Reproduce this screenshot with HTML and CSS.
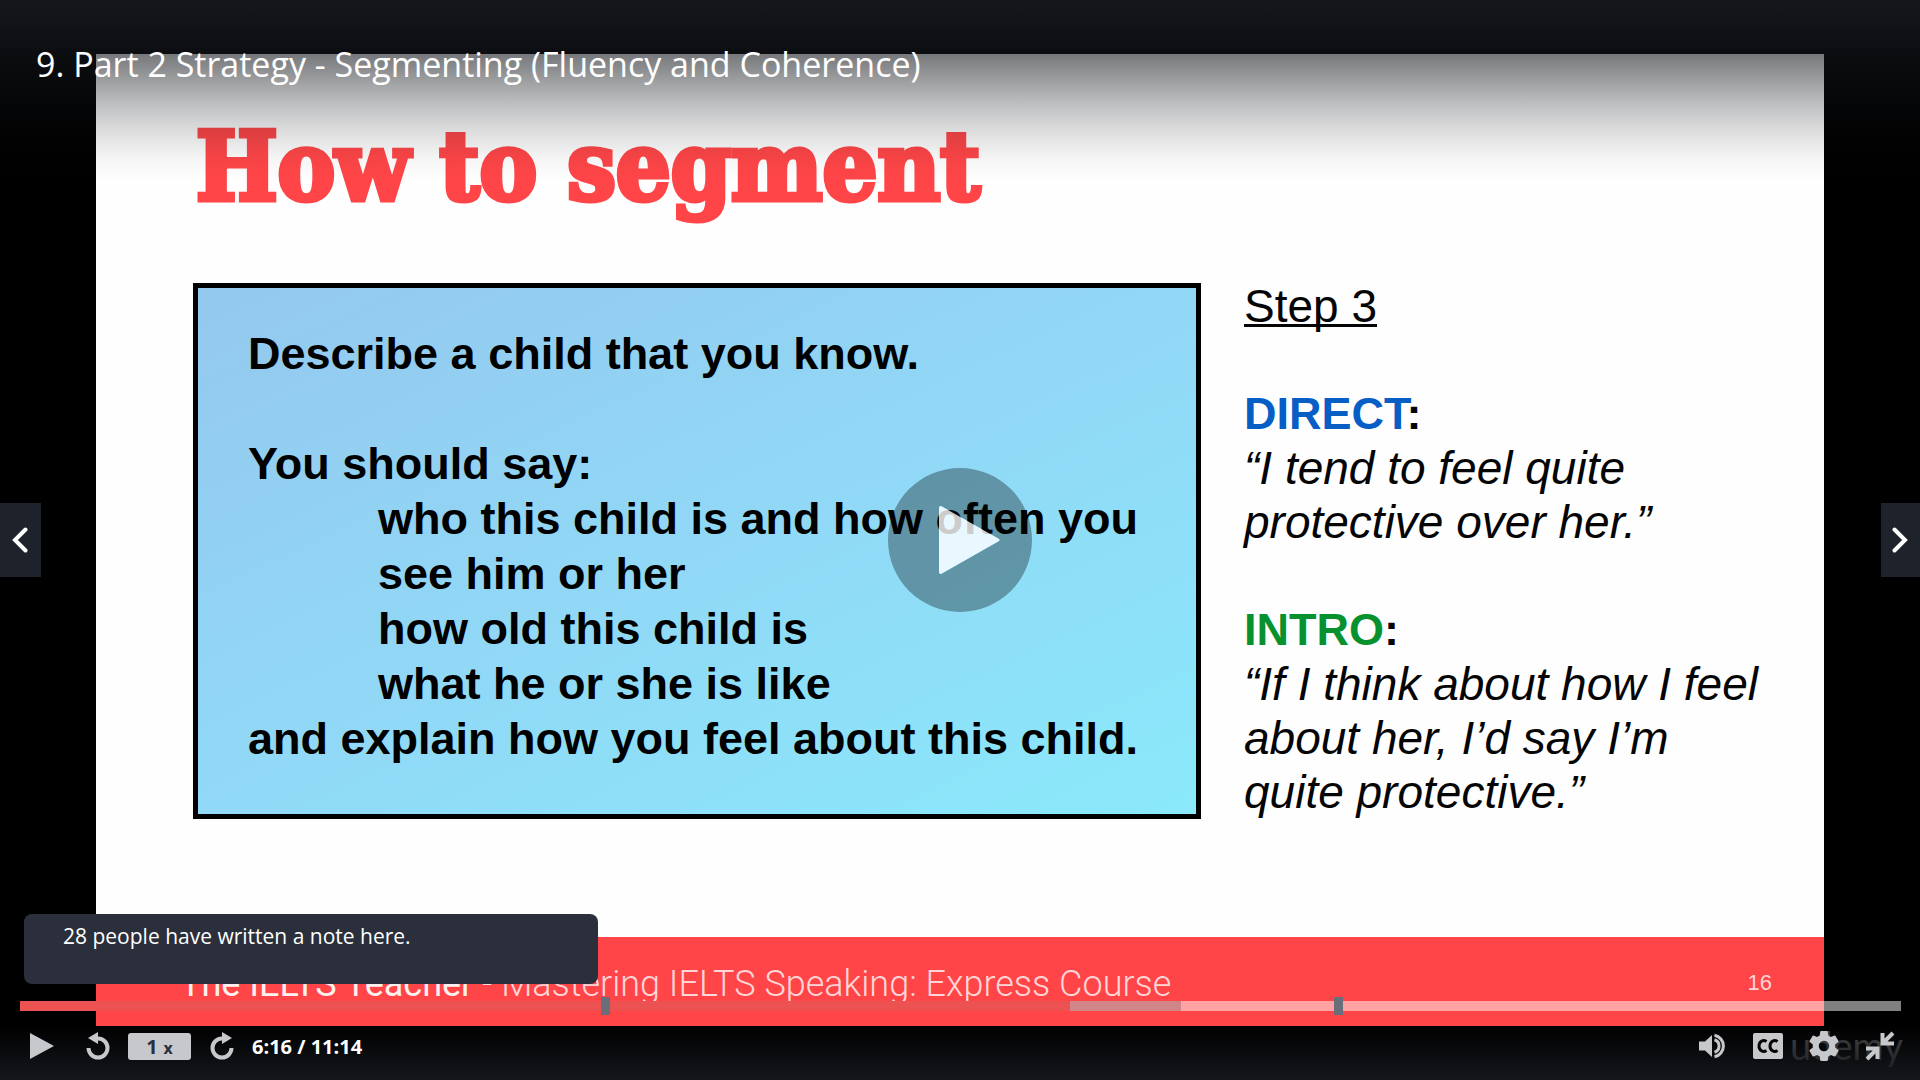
FILE: index.html
```html
<!DOCTYPE html>
<html lang="en">
<head>
<meta charset="utf-8">
<meta name="viewport" content="width=device-width, initial-scale=1">
<title>9. Part 2 Strategy - Segmenting (Fluency and Coherence)</title>
<link rel="stylesheet" href="styles.css">
</head>
<body>
<div class="player">
  <header class="player-header">
    <h1 class="lecture-title">9. Part 2 Strategy - Segmenting (Fluency and Coherence)</h1>
  </header>

  <main class="stage">
    <article class="slide">
      <div class="slide-content">
        <h2 class="slide-title">How to segment</h2>
        <div class="slide-columns">
          <section class="cue-card">
            <p>Describe a child that you know.</p>
            <p class="spaced">You should say:</p>
            <ul class="cue-list">
              <li>who this child is and how often you see him or her</li>
              <li>how old this child is</li>
              <li>what he or she is like</li>
            </ul>
            <p>and explain how you feel about this child.</p>
          </section>
          <section class="answers">
            <p><u>Step 3</u></p>
            <p class="spaced label"><span class="direct">DIRECT</span>:</p>
            <p class="quote">“I tend to feel quite<br>protective over her.”</p>
            <p class="spaced label"><span class="intro">INTRO</span>:</p>
            <p class="quote">“If I think about how I feel<br>about her, I’d say I’m<br>quite protective.”</p>
          </section>
        </div>
      </div>
      <footer class="slide-footer">
        <p class="course"><span class="teacher">The IELTS Teacher</span> - Mastering IELTS Speaking: Express Course</p>
        <span class="page-number">16</span>
      </footer>
    </article>
    <span class="watermark">udemy</span>
  </main>

  <button class="side-button previous" type="button" aria-label="Previous lecture">
    <svg width="16" height="26" viewBox="0 0 16 26"><path d="M13.500 2.500 3 13l10.500 10.500"/></svg>
  </button>
  <button class="side-button next" type="button" aria-label="Next lecture">
    <svg width="16" height="26" viewBox="0 0 16 26"><path d="M2.500 2.500 13 13 2.500 23.500"/></svg>
  </button>
  <button class="big-play" type="button" aria-label="Play video">
    <svg width="144" height="144" viewBox="0 0 144 144"><path class="disc" fill-rule="evenodd" d="M72 0a72 72 0 1 1 0 144 72 72 0 0 1 0-144zM53 38q-2 0-2 2v64q0 2 2 2l58-33q1-1 0-2z"/><path class="arrow" d="M53 38q-2 0-2 2v64q0 2 2 2l58-33q1-1 0-2z"/></svg>
  </button>

  <footer class="player-footer">
    <div class="note-popup" role="status">28 people have written a note here.</div>
    <div class="timeline">
      <input class="seek" type="range" min="0" max="674" value="376" aria-label="Seek">
      <button class="marker" style="left:30.900%" type="button" aria-label="Notes at 3:28"></button>
      <button class="marker" style="left:69.850%" type="button" aria-label="Notes at 7:51"></button>
    </div>
    <div class="controls">
      <button class="control play" type="button" aria-label="Play">
        <svg width="24" height="26" viewBox="0 0 24 26"><path d="M0 0 24 13 0 26z"/></svg>
      </button>
      <button class="control" type="button" aria-label="Rewind">
        <svg width="24" height="28" viewBox="0 0 24 28"><path d="M12 0v4.500a11.500 11.500 0 1 1-11.500 11.500h4A7.500 7.500 0 1 0 12 8.500V12L2 6z"/></svg>
      </button>
      <button class="control rate" type="button" aria-label="Playback rate">1<span class="times">x</span></button>
      <button class="control" type="button" aria-label="Forward">
        <svg width="24" height="28" viewBox="0 0 24 28"><path d="M12 0v4.500A11.500 11.500 0 1 0 23.500 16h-4A7.500 7.500 0 1 1 12 8.500V12l10-6z"/></svg>
      </button>
      <span class="time">6:16 / 11:14</span>
      <div class="control-group">
        <button class="control" type="button" aria-label="Volume">
          <svg width="28" height="26" viewBox="0 0 28 26"><path d="M0 8.500h6L13 2v22l-7-6.500H0z"/><path class="line" d="M15.500 6.800a6.500 6.500 0 0 1 0 12.400M15.500 2.200a11 11 0 0 1 0 21.600"/></svg>
        </button>
        <button class="control" type="button" aria-label="Captions">
          <svg width="30" height="26" viewBox="0 0 30 26"><path d="M2 0h26a2 2 0 0 1 2 2v22a2 2 0 0 1-2 2H2a2 2 0 0 1-2-2V2a2 2 0 0 1 2-2z"/><path class="cut" d="M13.500 8.500c-3.500-2.500-7.500.2-7.500 4.500s4 7 7.500 4.500M24.500 8.500c-3.500-2.500-7.500.2-7.500 4.500s4 7 7.500 4.500"/></svg>
        </button>
        <button class="control" type="button" aria-label="Settings">
          <svg width="30" height="30" viewBox="2 2 20 20"><path d="M19.430 12.980c.040-.320.070-.640.070-.980s-.030-.660-.070-.980l2.110-1.650c.190-.150.240-.420.120-.640l-2-3.460c-.120-.220-.390-.300-.610-.220l-2.490 1c-.520-.400-1.080-.730-1.690-.980l-.380-2.650A.488.488 0 0 0 14 2h-4c-.250 0-.460.180-.490.420l-.380 2.650c-.610.250-1.170.590-1.690.980l-2.490-1c-.230-.090-.490 0-.610.220l-2 3.460c-.130.220-.070.490.120.640l2.110 1.650c-.040.320-.070.650-.070.980s.030.660.070.980l-2.110 1.650c-.190.150-.240.420-.120.640l2 3.460c.120.220.390.300.610.220l2.490-1c.520.400 1.080.730 1.690.980l.380 2.650c.030.240.240.420.490.420h4c.250 0 .460-.180.490-.420l.380-2.650c.610-.250 1.170-.590 1.690-.980l2.490 1c.230.090.490 0 .610-.220l2-3.460c.120-.220.070-.490-.120-.640zM12 15.500a3.500 3.500 0 1 1 0-7 3.500 3.500 0 0 1 0 7z"/></svg>
        </button>
        <button class="control" type="button" aria-label="Exit full screen">
          <svg width="30" height="30" viewBox="0 0 30 30"><path class="thick" d="M28 2 18.500 11.500M17.500 2v10.500H29M2 28l9.500-9.500M1 17.500h11.500V28"/></svg>
        </button>
      </div>
    </div>
  </footer>
</div>
</body>
</html>
```
FILE: styles.css
```css
* {
  box-sizing: border-box;
}

body {
  margin: 0;
  background: #000;
  color: #fff;
  font-family: "Open Sans", "Noto Sans", sans-serif;
}

h1, h2, p, ul {
  margin: 0;
  padding: 0;
  font-weight: inherit;
}

button {
  margin: 0;
  padding: 0;
  border: 0;
  background: none;
  color: inherit;
  font: inherit;
  cursor: pointer;
}

svg {
  display: block;
}

.player {
  position: relative;
  display: flex;
  min-height: 100vh;
  overflow: hidden;
}

/* Header laid over the video */
.player-header {
  position: absolute;
  z-index: 1;
  top: 0;
  left: 0;
  right: 0;
  height: 180px;
  padding: 40px 36px;
  background: linear-gradient(
    rgba(20, 23, 28, 1),
    rgba(20, 23, 28, .58) 30%,
    rgba(20, 23, 28, .29) 56%,
    rgba(20, 23, 28, .15) 72%,
    rgba(20, 23, 28, .04) 88%,
    rgba(20, 23, 28, 0));
}

.lecture-title {
  font-size: 34px;
  line-height: 48px;
}

/* Video picture */
.stage {
  position: relative;
  display: flex;
  flex: 1;
  padding: 54px 5%;
}

.slide {
  display: flex;
  flex: 1;
  flex-direction: column;
  background: #fefefe;
  color: #050505;
  font-family: "Liberation Sans", Arial, sans-serif;
}

.slide-content {
  flex: 1;
  padding: 57px 60px 0 97px;
}

.slide-title {
  padding-left: 3px;
  color: #ff4547;
  font-family: "DejaVu Serif Condensed", "DejaVu Serif", serif;
  font-size: 96px;
  font-weight: bold;
  font-stretch: condensed;
  line-height: 112px;
  -webkit-text-stroke: 5px #ff4547;
}

.slide-columns {
  display: flex;
  align-items: flex-start;
  gap: 43px;
  margin-top: 60px;
}

.cue-card {
  flex: 1;
  padding: 38px 40px 48px 50px;
  border: 5px solid #000;
  background: linear-gradient(155deg, #94c8ee, #91d8f6 50%, #8ae9fb);
  color: #000;
  font-size: 45px;
  font-weight: bold;
  line-height: 55px;
}

.spaced {
  padding-top: 55px;
}

.cue-list {
  padding-left: 130px;
  list-style: none;
}

.answers {
  width: 520px;
  margin-top: -4px;
  font-size: 46px;
  line-height: 54px;
}

.answers .spaced {
  padding-top: 54px;
}

.answers u {
  text-decoration-thickness: 3px;
  text-decoration-skip-ink: none;
}

.label {
  font-size: 45px;
  font-weight: bold;
}

.direct {
  color: #075fc6;
}

.intro {
  color: #08922f;
}

.quote {
  font-style: italic;
}

.slide-footer {
  display: flex;
  justify-content: space-between;
  height: 89px;
  padding: 26px 52px 0 84px;
  background: #ff4547;
  color: #ffd6d7;
  line-height: 40px;
}

.course {
  font-family: Roboto, "Liberation Sans", sans-serif;
  font-size: 36px;
  font-weight: 300;
  line-height: 42px;
}

.teacher {
  color: #fff0f0;
  font-weight: 400;
}

.page-number {
  font-size: 22px;
}

.watermark {
  position: absolute;
  right: 17px;
  bottom: 11px;
  color: #444;
  font-family: Lato, sans-serif;
  font-size: 38px;
  line-height: 48px;
}

/* Buttons over the picture */
.side-button {
  position: absolute;
  top: calc(50% - 37px);
  display: flex;
  align-items: center;
  width: 41px;
  height: 74px;
  padding: 0 12px;
  background: #1e222a;
}

.side-button path {
  fill: none;
  stroke: #fff;
  stroke-width: 4;
  stroke-linecap: round;
}

.previous {
  left: 0;
}

.next {
  right: 0;
  width: 39px;
  padding: 0 11px;
}

.big-play {
  position: absolute;
  top: calc(50% - 72px);
  left: calc(50% - 72px);
  border-radius: 50%;
}

.disc {
  fill: rgba(0, 4, 4, .33);
}

.arrow {
  fill: rgba(255, 255, 255, .8);
}

/* Footer laid over the video */
.player-footer {
  position: absolute;
  bottom: 0;
  left: 0;
  right: 0;
  padding: 0 19px 0 20px;
}

.note-popup {
  width: 574px;
  height: 70px;
  margin: 0 0 13px 4px;
  padding: 8px 39px;
  border-radius: 8px;
  background: #2a2f3b;
  font-size: 21px;
  line-height: 28px;
}

.timeline {
  position: relative;
  display: flex;
  align-items: center;
  height: 18px;
}

.seek {
  width: 100%;
  height: 10px;
  margin: 0;
  appearance: none;
  background: linear-gradient(90deg,
    #ec5252 55.8%,
    rgba(163, 197, 200, .5) 55.8%, rgba(163, 197, 200, .5) 61.7%,
    rgba(255, 255, 255, .5) 61.7%);
  cursor: pointer;
}

.seek::-webkit-slider-thumb {
  appearance: none;
  width: 0;
  height: 0;
}

.marker {
  position: absolute;
  top: 0;
  width: 9px;
  height: 18px;
  background: #686f7a;
}

.controls {
  display: flex;
  align-items: center;
  height: 65px;
  margin: 0 -19px 0 -20px;
  padding: 0 25px 3px 30px;
  background: linear-gradient(rgba(20, 23, 28, 0) 11px, #14171c);
  color: #c7c8cb;
}

.control path {
  fill: currentColor;
}

.control .line,
.control .cut,
.control .thick {
  fill: none;
  stroke: currentColor;
  stroke-width: 3;
}

.control .cut {
  stroke: #050506;
}

.control .thick {
  stroke-width: 4;
}

.play {
  margin-right: 32px;
}

.rate {
  width: 63px;
  height: 27px;
  margin: 0 19px 0 18px;
  border-radius: 3px;
  background: #c7c8cb;
  color: #29303b;
  font-size: 20px;
  font-weight: bold;
  line-height: 27px;
}

.times {
  margin-left: 6px;
  font-size: 16px;
}

.time {
  margin-left: 18px;
  color: #fff;
  font-size: 20px;
  font-weight: bold;
}

.control-group {
  display: flex;
  align-items: center;
  gap: 26px;
  margin-left: auto;
}
```
